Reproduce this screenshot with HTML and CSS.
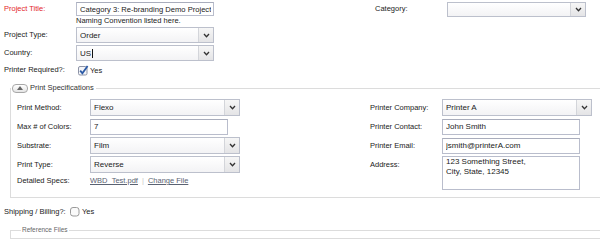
FILE: index.html
```html
<!DOCTYPE html>
<html>
<head>
<meta charset="utf-8">
<title>Project</title>
<link rel="stylesheet" href="styles.css">
</head>
<body>
<form class="page">
  <div class="top-grid">
    <label class="lbl lbl-14 req">Project Title:</label>
    <div class="cell">
      <input class="txt txt-tight w138 h14" value="Category 3: Re-branding Demo Project">
      <div class="hint">Naming Convention listed here.</div>
    </div>
    <label class="lbl lbl-14">Category:</label>
    <div class="sel w139 h15">
      <select><option></option></select>
      <span class="arr"><svg width="7" height="5" viewBox="0 0 7 5"><path d="M1 1 L3.5 3.8 L6 1" fill="none" stroke="#333" stroke-width="1.3"/></svg></span>
    </div>

    <label class="lbl lbl-16 col1">Project Type:</label>
    <div class="sel w138 h16">
      <select><option>Order</option></select>
      <span class="arr"><svg width="7" height="5" viewBox="0 0 7 5"><path d="M1 1 L3.5 3.8 L6 1" fill="none" stroke="#333" stroke-width="1.3"/></svg></span>
    </div>

    <label class="lbl lbl-16 col1">Country:</label>
    <div class="sel w138 h16">
      <span class="val">US<span class="caret"></span></span>
      <span class="arr"><svg width="7" height="5" viewBox="0 0 7 5"><path d="M1 1 L3.5 3.8 L6 1" fill="none" stroke="#333" stroke-width="1.3"/></svg></span>
    </div>

    <label class="lbl lbl-14 col1">Printer Required?:</label>
    <div class="check">
      <svg class="cb" width="11" height="11" viewBox="0 0 11 11"><rect x="0.5" y="1.5" width="8.5" height="8.5" rx="1.5" fill="#f4f5f8" stroke="#8d93a6"/><path d="M2.2 5.6 L4.4 8.3 L9.6 1" fill="none" stroke="#2b5aa6" stroke-width="1.8"/></svg>
      <span>Yes</span>
    </div>
  </div>

  <fieldset class="fs">
    <legend class="fs-legend">
      <span class="toggle"><svg width="6" height="4" viewBox="0 0 6 4"><path d="M0 4 L3 0 L6 4 Z" fill="#666"/></svg></span>
      <span>Print Specifications</span>
    </legend>
    <div class="spec-grid">
      <label class="lbl">Print Method:</label>
      <div class="sel w150 h17">
        <select><option>Flexo</option></select>
        <span class="arr"><svg width="7" height="5" viewBox="0 0 7 5"><path d="M1 1 L3.5 3.8 L6 1" fill="none" stroke="#333" stroke-width="1.3"/></svg></span>
      </div>
      <label class="lbl">Printer Company:</label>
      <div class="sel w150 h17">
        <select><option>Printer A</option></select>
        <span class="arr"><svg width="7" height="5" viewBox="0 0 7 5"><path d="M1 1 L3.5 3.8 L6 1" fill="none" stroke="#333" stroke-width="1.3"/></svg></span>
      </div>

      <label class="lbl">Max # of Colors:</label>
      <input class="txt w138 h16" value="7">
      <label class="lbl">Printer Contact:</label>
      <input class="txt w138 h16" value="John Smith">

      <label class="lbl">Substrate:</label>
      <div class="sel w150 h17">
        <select><option>Film</option></select>
        <span class="arr"><svg width="7" height="5" viewBox="0 0 7 5"><path d="M1 1 L3.5 3.8 L6 1" fill="none" stroke="#333" stroke-width="1.3"/></svg></span>
      </div>
      <label class="lbl">Printer Email:</label>
      <input class="txt w138 h16" value="jsmith@printerA.com">

      <label class="lbl">Print Type:</label>
      <div class="sel w150 h17">
        <select><option>Reverse</option></select>
        <span class="arr"><svg width="7" height="5" viewBox="0 0 7 5"><path d="M1 1 L3.5 3.8 L6 1" fill="none" stroke="#333" stroke-width="1.3"/></svg></span>
      </div>
      <label class="lbl">Address:</label>
      <textarea class="area w138">123 Something Street,
City, State, 12345</textarea>

      <label class="lbl lbl-top">Detailed Specs:</label>
      <div class="files">
        <a href="#" class="link">WBD_Test.pdf</a><span class="sep">|</span><a href="#" class="link">Change File</a>
      </div>
    </div>
  </fieldset>

  <div class="ship">
    <label class="ship-lbl">Shipping / Billing?:</label>
    <div class="check">
      <svg class="cb" width="11" height="11" viewBox="0 0 11 11"><rect x="0.5" y="1.5" width="8.5" height="8.5" rx="2.5" fill="#fafafa" stroke="#9a9a9a"/></svg>
      <span>Yes</span>
    </div>
  </div>

  <fieldset class="fs fs-ref">
    <legend class="ref-legend">Reference Files</legend>
    <div class="ref-body"></div>
  </fieldset>
</form>
</body>
</html>
```

FILE: styles.css
```css
html, body {
  margin: 0;
  padding: 0;
  background: #fff;
  overflow: hidden;
}
body {
  font-family: "Liberation Sans", Arial, sans-serif;
  font-size: 7.5px;
  color: #222;
}
.page {
  padding: 2px 0 0 4px;
}
.top-grid {
  display: grid;
  grid-template-columns: 72px 299px 72px 139px;
  row-gap: 2px;
  align-items: start;
}
.col1 { grid-column: 1; }
.lbl { display: block; white-space: nowrap; }
.lbl-14 { line-height: 14px; }
.lbl-16 { line-height: 16px; }
.req { color: #e3252a; }
.hint { line-height: 9px; margin-top: 0; color: #222; font-size: 7.5px; }

.txt {
  box-sizing: border-box;
  border: 1px solid #b9bdcc;
  border-top-color: #a9adbc;
  background: #fff;
  font-family: "Liberation Sans", Arial, sans-serif;
  font-size: 8px;
  color: #222;
  padding: 0 3px;
  margin: 0;
  display: block;
  outline: none;
}
.txt-tight { font-size: 7.6px; padding: 0 2px 0 3px; }
.w138 { width: 138px; }
.w139 { width: 139px; }
.w150 { width: 150px; }
.h14 { height: 14px; }
.h15 { height: 15px; }
.h16 { height: 16px; }
.h17 { height: 17px; }

.sel {
  box-sizing: border-box;
  display: flex;
  align-items: stretch;
  border: 1px solid #bcc0cc;
  background: linear-gradient(#ffffff, #f3f3f5);
}
.sel select, .sel .val {
  flex: 1;
  min-width: 0;
  -webkit-appearance: none;
  appearance: none;
  border: none;
  background: transparent;
  font-family: "Liberation Sans", Arial, sans-serif;
  font-size: 8px;
  color: #222;
  padding: 0 3px;
  margin: 0;
  outline: none;
  display: flex;
  align-items: center;
}
.caret {
  display: inline-block;
  width: 1px;
  height: 9px;
  background: #111;
  margin-left: 1px;
}
.arr {
  width: 14px;
  flex: none;
  border-left: 1px solid #d3d5da;
  background: linear-gradient(#f6f6f6, #e4e4e6);
  display: flex;
  align-items: center;
  justify-content: center;
}

.check {
  display: flex;
  align-items: center;
  height: 14px;
  gap: 1px;
  font-size: 7.5px;
}
.top-grid .check { margin-left: 2px; }
.cb { display: block; }

.fs {
  margin: 6px 0 0 6px;
  padding: 0;
  border: 1px solid #dcdcdc;
  border-right: none;
  min-width: 0;
}
.fs-legend {
  margin-left: 0;
  padding: 0 2px 0 1px;
  display: flex;
  align-items: center;
  gap: 2px;
  line-height: 10px;
  color: #333;
  font-size: 7.5px;
}
.toggle {
  box-sizing: border-box;
  width: 16px;
  height: 9px;
  border: 1px solid #a8a8a8;
  border-radius: 4px;
  background: linear-gradient(#ffffff, #e4e4e4);
  display: flex;
  align-items: center;
  justify-content: center;
}
.spec-grid {
  display: grid;
  grid-template-columns: 73px 280px 72px 150px;
  grid-template-rows: 17px 17px 17px 17px 15px;
  row-gap: 2px;
  align-items: center;
  padding: 6px 0 7px 6px;
}
.spec-grid .lbl { line-height: 17px; }
.spec-grid .lbl-top { line-height: 11px; align-self: start; }
.area {
  box-sizing: border-box;
  grid-row: span 2;
  height: 34px;
  resize: none;
  border: 1px solid #b9bdcc;
  font-family: "Liberation Sans", Arial, sans-serif;
  font-size: 8px;
  line-height: 10px;
  color: #222;
  padding: 0 3px;
  margin: 0;
  overflow: hidden;
  outline: none;
  align-self: start;
}
.files {
  align-self: start;
  line-height: 11px;
  font-size: 7.5px;
  white-space: nowrap;
}
.link { color: #5a6272; text-decoration: underline; }
.sep { color: #c8c8c8; margin: 0 4px; }

.ship {
  display: flex;
  align-items: center;
  height: 12px;
  margin-top: 7px;
}
.ship-lbl { width: 66px; }

.fs-ref { margin-top: 9px; }
.ref-legend {
  margin-left: 10px;
  padding: 0 1px;
  line-height: 8px;
  font-size: 6.5px;
  color: #666;
}
.ref-body { height: 4px; }
```
